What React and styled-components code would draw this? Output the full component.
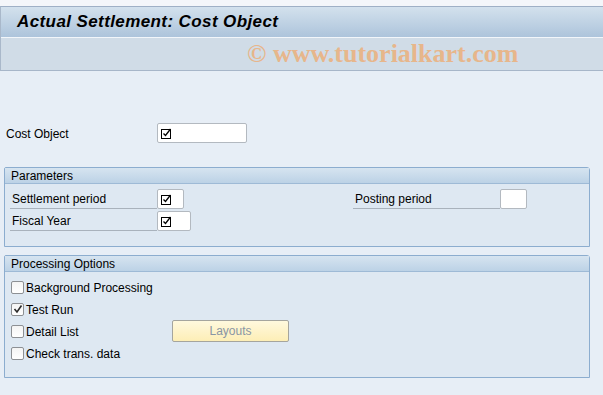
import React from "react";
import styled, { createGlobalStyle } from "styled-components";

const Global = createGlobalStyle`
  html, body { margin: 0; padding: 0; }
  body {
    background: #e6edf5;
    font-family: "Liberation Sans", Arial, sans-serif;
    font-size: 12px;
    color: #000;
  }
`;

const Page = styled.div`
  width: 603px;
  height: 395px;
  overflow: hidden;
  background: #e7eef6;
  display: flex;
  flex-direction: column;
`;

const TopStrip = styled.div`
  height: 6px;
  background: #f4f6fa;
`;

const Header = styled.div`
  border-left: 1px solid #a9b8ca;
  border-top: 1px solid #9fb0c6;
  border-bottom: 1px solid #a7b6c9;
  display: flex;
  flex-direction: column;
`;

const TitleBar = styled.div`
  height: 30px;
  background: linear-gradient(#d3e1ed, #adc4db);
  border-bottom: 1px solid #f2f6fa;
  display: flex;
  align-items: center;
  padding-left: 16px;
`;

const Title = styled.h1`
  margin: 0;
  font-family: "Liberation Sans", Arial, sans-serif;
  font-size: 17px;
  font-weight: bold;
  font-style: italic;
  letter-spacing: 0.4px;
  color: #000;
`;

const Toolbar = styled.div`
  height: 32px;
  background: #d0dce7;
  display: flex;
  align-items: center;
  padding-left: 246px;
`;

const Watermark = styled.span`
  font-family: "Liberation Serif", "Times New Roman", serif;
  font-weight: bold;
  font-size: 26px;
  color: #e7b68b;
  white-space: nowrap;
`;

const Content = styled.div`
  display: flex;
  flex-direction: column;
  padding: 52px 13px 0 4px;
`;

const TopRow = styled.div`
  display: flex;
  align-items: center;
  height: 20px;
  padding-left: 2px;
`;

const TopLabel = styled.span`
  width: 151px;
  padding-top: 1px;
`;

const Input = styled.div`
  width: ${(p) => p.$w}px;
  height: 18px;
  box-sizing: content-box;
  background: #fff;
  border: 1px solid #b3b9c0;
  border-radius: 2px;
  display: flex;
  align-items: center;
  padding-left: 3px;
`;

const Group = styled.section`
  margin-top: ${(p) => p.$mt}px;
  border: 1px solid #8cadcf;
  border-radius: 2px 3px 0 0;
  background: #dee8f2;
  display: flex;
  flex-direction: column;
  padding-bottom: ${(p) => p.$pb}px;
`;

const GroupHeader = styled.div`
  height: 15px;
  line-height: 16px;
  background: linear-gradient(#d6e4f0, #bcd2e6);
  border-bottom: 1px solid #9ebad6;
  padding-left: 6px;
`;

const Rows = styled.div`
  display: flex;
  flex-direction: column;
  gap: ${(p) => p.$gap}px;
  padding-top: ${(p) => p.$pt}px;
`;

const FieldRow = styled.div`
  display: flex;
  align-items: flex-end;
  height: 20px;
`;

const FieldPair = styled.div`
  display: flex;
  align-items: flex-end;
  margin-left: ${(p) => p.$ml}px;
`;

const FieldLabel = styled.span`
  width: 145px;
  height: 19px;
  line-height: 21px;
  padding-left: 2px;
  border-bottom: 1px solid #a9b2bc;
  margin-left: 5px;
`;

const CheckRow = styled.div`
  display: flex;
  align-items: center;
  height: 22px;
  padding-left: 6px;
`;

const CheckCell = styled.label`
  display: flex;
  align-items: center;
  width: 161px;
`;

const CheckText = styled.span`
  padding-top: 1px;
`;

const Box = styled.span`
  width: 11px;
  height: 11px;
  border: 1px solid #8d9094;
  border-radius: 2px;
  background: linear-gradient(#f4f4f4, #ffffff);
  display: flex;
  align-items: center;
  justify-content: center;
  margin-right: 2px;
`;

const Button = styled.button`
  width: 117px;
  height: 22px;
  border: 1px solid #a5a59e;
  border-radius: 2px;
  background: linear-gradient(#fff9de, #fdeeb6);
  font-family: "Liberation Sans", Arial, sans-serif;
  font-size: 12px;
  color: #8a96a4;
  padding: 0;
`;

const ReqIcon = () => (
  <svg width="11" height="11" viewBox="0 0 11 11">
    <rect x="0.5" y="1.5" width="9" height="9" fill="none" stroke="#000" />
    <path d="M2.5 5.5 L4.5 7.5 L9.5 1" fill="none" stroke="#000" strokeWidth="1.3" />
  </svg>
);

const Tick = () => (
  <svg width="10" height="10" viewBox="0 0 10 10">
    <path d="M1.5 5 L4 8 L8.5 1.5" fill="none" stroke="#2b2b2b" strokeWidth="1.6" />
  </svg>
);

const Check = ({ checked, children }) => (
  <CheckCell>
    <Box>{checked && <Tick />}</Box>
    <CheckText>{children}</CheckText>
  </CheckCell>
);

export default function App() {
  return (
    <Page>
      <Global />
      <TopStrip />
      <Header>
        <TitleBar>
          <Title>Actual Settlement: Cost Object</Title>
        </TitleBar>
        <Toolbar>
          <Watermark>© www.tutorialkart.com</Watermark>
        </Toolbar>
      </Header>
      <Content>
        <TopRow>
          <TopLabel>Cost Object</TopLabel>
          <Input $w={85}><ReqIcon /></Input>
        </TopRow>

        <Group $mt={24} $pb={15}>
          <GroupHeader>Parameters</GroupHeader>
          <Rows $gap={2} $pt={5}>
            <FieldRow>
              <FieldPair $ml={0}>
                <FieldLabel>Settlement period</FieldLabel>
                <Input $w={22}><ReqIcon /></Input>
              </FieldPair>
              <FieldPair $ml={164}>
                <FieldLabel>Posting period</FieldLabel>
                <Input $w={22} />
              </FieldPair>
            </FieldRow>
            <FieldRow>
              <FieldPair $ml={0}>
                <FieldLabel>Fiscal Year</FieldLabel>
                <Input $w={29}><ReqIcon /></Input>
              </FieldPair>
            </FieldRow>
          </Rows>
        </Group>

        <Group $mt={8} $pb={13}>
          <GroupHeader>Processing Options</GroupHeader>
          <Rows $gap={0} $pt={4}>
            <CheckRow><Check>Background Processing</Check></CheckRow>
            <CheckRow><Check checked>Test Run</Check></CheckRow>
            <CheckRow>
              <Check>Detail List</Check>
              <Button>Layouts</Button>
            </CheckRow>
            <CheckRow><Check>Check trans. data</Check></CheckRow>
          </Rows>
        </Group>
      </Content>
    </Page>
  );
}
